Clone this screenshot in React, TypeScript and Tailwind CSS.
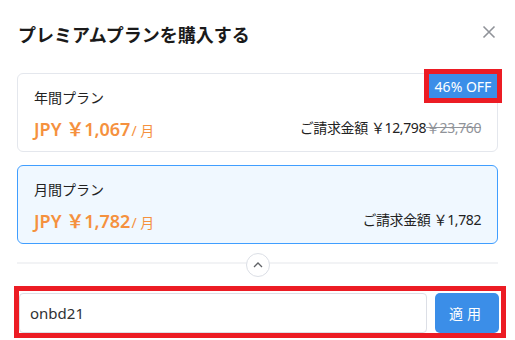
import React from "react";

const font = { fontFamily: '"Noto Sans", "Noto Sans CJK JP", sans-serif' };

function Plan({
  name,
  price,
  right,
  selected,
  badge,
}: {
  name: string;
  price: string;
  right: React.ReactNode;
  selected?: boolean;
  badge?: boolean;
}) {
  return (
    <div
      className={
        "relative mx-[17px] h-[79px] rounded-[6px] border px-[16px] pt-[14px] " +
        (selected ? "border-[#409eff] bg-[#f0f8ff]" : "border-[#e4e7ed] bg-white")
      }
    >
      <div className="text-[14px] leading-[20px] text-[#222]">{name}</div>
      <div className="mt-[9px] flex items-end justify-between">
        <div className="flex items-baseline text-[#f5913e]">
          <span className="text-[18px] font-semibold leading-[24px]">{price}</span>
          <span className="ml-[1px] text-[14px]">/ 月</span>
        </div>
        <div className="pb-[3px] text-[14px] leading-[20px] tracking-[-0.4px] text-[#222]">{right}</div>
      </div>
      {badge && (
        <div className="absolute right-[-5px] top-[-5px] border-[5px] border-[#ec1c24]">
          <div className="flex h-[24px] w-[68px] items-center justify-center bg-[#3b8ee8] text-[14px] text-white">
            46% OFF
          </div>
        </div>
      )}
    </div>
  );
}

export default function App() {
  return (
    <div className="h-[340px] w-[515px] overflow-hidden bg-white" style={font}>
      <div className="flex h-[73px] items-start justify-between pl-[18px] pr-[19px] pt-[24px]">
        <div className="text-[18px] font-bold leading-[22px] text-[#1a1a1a]">
          プレミアムプランを購入する
        </div>
        <svg width="14" height="14" viewBox="0 0 14 14" className="mt-[1px]">
          <path d="M1.5 1.5 L12.5 12.5 M12.5 1.5 L1.5 12.5" stroke="#909399" strokeWidth="1.6" />
        </svg>
      </div>
      <Plan
        name="年間プラン"
        price="JPY ￥1,067"
        badge
        right={
          <span>
            ご請求金額 ￥12,798<span className="text-[#909399] line-through">￥23,760</span>
          </span>
        }
      />
      <div className="h-[13px]" />
      <Plan name="月間プラン" price="JPY ￥1,782" selected right={<span>ご請求金額 ￥1,782</span>} />
      <div className="relative mx-[17px] flex h-[42px] items-center justify-center">
        <div className="absolute left-0 right-0 top-[18px] h-[2px] bg-[#f2f3f5]" />
        <div className="relative flex h-[24px] w-[24px] items-center justify-center rounded-full border border-[#dcdfe6] bg-white">
          <svg width="10" height="6" viewBox="0 0 10 6">
            <path d="M1 5 L5 1 L9 5" stroke="#606266" strokeWidth="1.3" fill="none" />
          </svg>
        </div>
      </div>
      <div className="ml-[14px] flex h-[52px] w-[492px] gap-[8px] border-[5px] border-[#ec1c24] pr-[2px] pt-[2px]">
        <div className="flex h-[40px] flex-1 items-center rounded-[4px] border border-[#dcdfe6] pl-[10px] text-[15px] text-[#303133]">
          onbd21
        </div>
        <button className="flex h-[40px] w-[64px] items-center justify-center rounded-[5px] bg-[#3b8ee8] text-[14px] tracking-[4px] text-white">
          適用
        </button>
      </div>
    </div>
  );
}
